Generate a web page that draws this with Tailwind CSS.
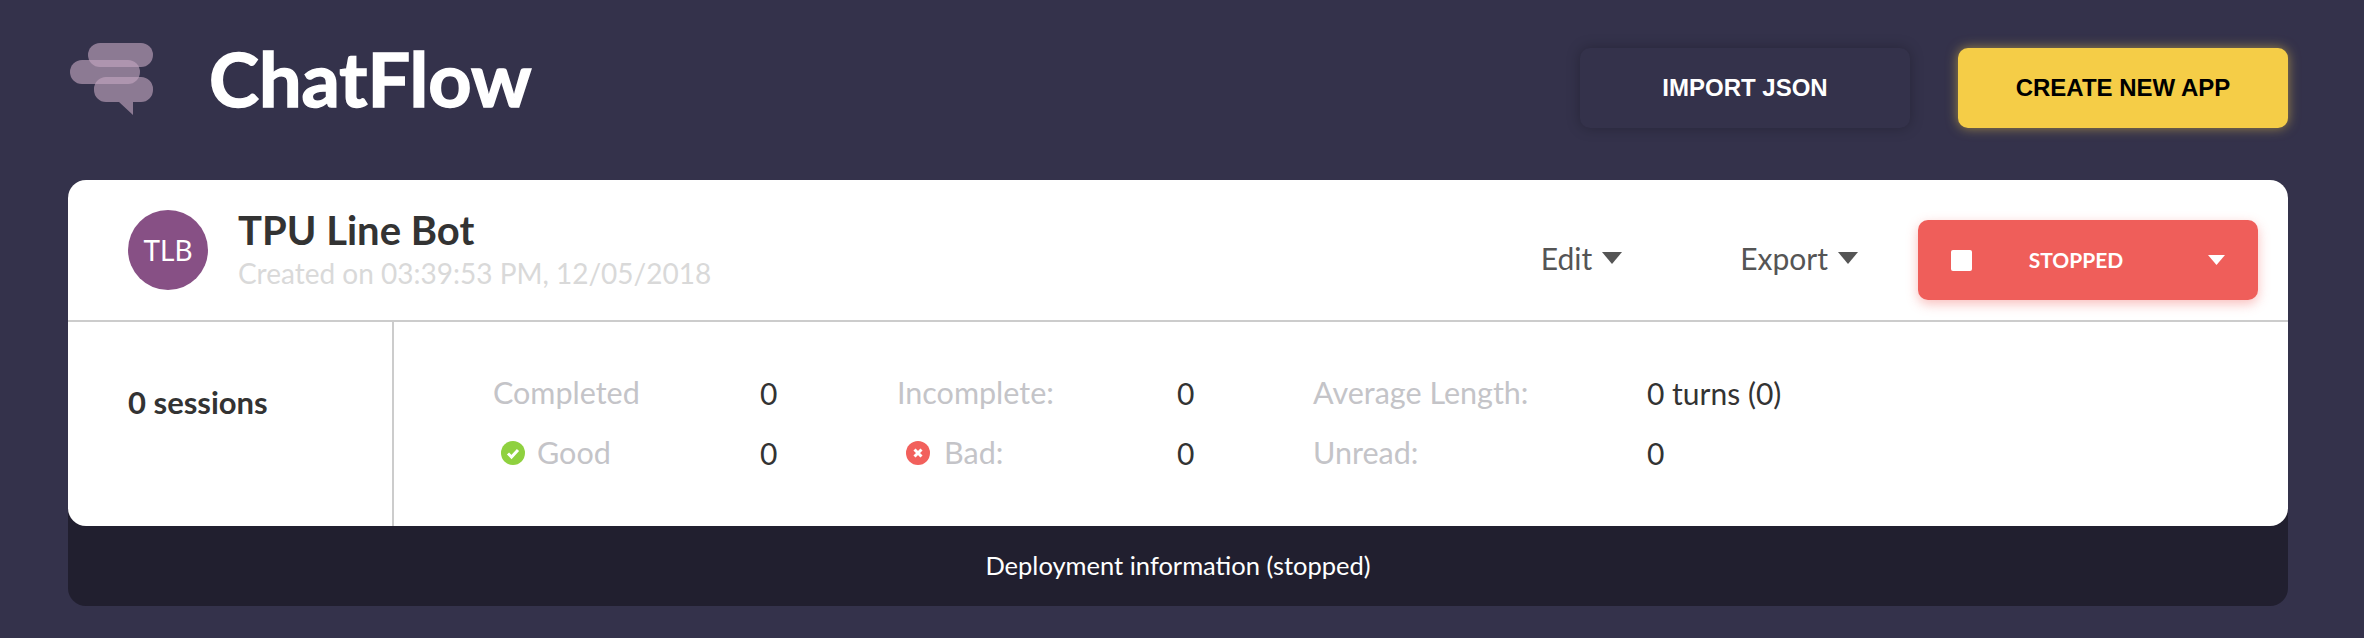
<!DOCTYPE html>
<html lang="en">
<head>
    <meta charset="UTF-8">
    <title>ChatFlow</title>
    <script src="https://cdn.jsdelivr.net/npm/@tailwindcss/browser@4"></script>
</head>
<body class="bg-[#34324b] font-['Lato',sans-serif] h-[638px] overflow-hidden">

<div class="pl-[68px] pr-[76px]">
    <!-- Header -->
    <div class="h-[180px] flex items-start justify-between">
        <div class="flex items-center pt-[38px]">
            <svg width="100" height="80" viewBox="0 0 100 80" class="block blur-[0.6px]">
                <g fill="#c3a6c0" fill-opacity="0.62">
                    <rect x="20" y="5" width="65" height="24" rx="12"/>
                    <rect x="2" y="22" width="70" height="24" rx="12"/>
                    <path d="M38 39h35a12 12 0 0 1 12 12v1a12 12 0 0 1-12 12h-8l0 13-14-13h-13a12 12 0 0 1-12-12v-1a12 12 0 0 1 12-12z"/>
                </g>
            </svg>
            <span class="ml-[41px] text-white font-bold text-[75.500px] leading-[70px] [-webkit-text-stroke:1.5px_white] blur-[0.6px]">ChatFlow</span>
        </div>
        <div class="flex gap-[48px] pt-[48px]">
            <button class="w-[330px] h-[80px] rounded-[10px] bg-[#34324b] text-white font-['Liberation_Sans',sans-serif] font-bold text-[24px] shadow-[0_0_14px_rgba(0,0,0,0.25)]">IMPORT JSON</button>
            <button class="w-[330px] h-[80px] rounded-[10px] bg-[#f5cd47] text-black font-['Liberation_Sans',sans-serif] font-bold text-[24px] shadow-[0_0_12px_rgba(245,205,71,0.55)]">CREATE NEW APP</button>
        </div>
    </div>

    <!-- App card -->
    <div class="bg-[#211f2f] rounded-[18px]">
        <div class="bg-white rounded-[18px] h-[346px] flex flex-col">
            <div class="h-[142px] shrink-0 flex items-start pl-[60px] pr-[30px] pt-[30px] border-b-2 border-[#cccccc]">
                <div class="w-[80px] h-[80px] rounded-full bg-[#875085] text-white text-[28px] flex items-center justify-center">TLB</div>
                <div class="ml-[30px] -mt-[4px]">
                    <div class="text-[40px] leading-[48px] font-bold text-[#333333]">TPU Line Bot</div>
                    <div class="text-[28px] leading-[38px] text-[#d9d9d9]">Created on 03:39:53 PM, 12/05/2018</div>
                </div>
                <div class="ml-auto flex items-center h-[76px] mt-[10px] text-[#555555] text-[30px]">
                    <span>Edit</span>
                    <svg width="20" height="12" viewBox="0 0 20 12" class="ml-[10px]"><path d="M0 0h20l-10 12z" fill="#555555"/></svg>
                    <span class="ml-[118px]">Export</span>
                    <svg width="20" height="12" viewBox="0 0 20 12" class="ml-[10px]"><path d="M0 0h20l-10 12z" fill="#555555"/></svg>
                </div>
                <div class="ml-[60px] mt-[10px] w-[340px] h-[80px] rounded-[10px] bg-[#ef5e5a] text-white flex items-center px-[33px] shadow-[0_4px_12px_rgba(239,94,90,0.4)]">
                    <div class="w-[21px] h-[21px] bg-white rounded-[2px]"></div>
                    <span class="flex-1 text-center text-[21px] font-bold pr-[28px]">STOPPED</span>
                    <svg width="17" height="10" viewBox="0 0 17 10"><path d="M0 0h17l-8.500 10z" fill="#ffffff"/></svg>
                </div>
            </div>
            <div class="flex flex-1">
                <div class="w-[326px] shrink-0 border-r-2 border-[#cccccc] pl-[60px] pt-[62px] text-[31px] leading-[36px] font-bold text-[#333333]">0 sessions</div>
                <div class="pt-[41px] pl-[99px] grid grid-cols-[267px_137px_280px_136px_334px_auto] grid-rows-[60px_60px] items-center text-[30.500px] text-[#c4c4c8]">
                    <div>Completed</div>
                    <div class="text-[#333333] text-[30px]">0</div>
                    <div>Incomplete:</div>
                    <div class="text-[#333333] text-[30px]">0</div>
                    <div>Average Length:</div>
                    <div class="text-[#333333] text-[30px]">0 turns (0)</div>
                    <div class="flex items-center pl-[8px]">
                        <svg width="24" height="24" viewBox="0 0 24 24"><circle cx="12" cy="12" r="12" fill="#8fd13f"/><path d="M7 12.500l3.500 3.500 6.500-7" fill="none" stroke="#ffffff" stroke-width="3"/></svg>
                        <span class="ml-[12px]">Good</span>
                    </div>
                    <div class="text-[#333333] text-[30px]">0</div>
                    <div class="flex items-center pl-[9px]">
                        <svg width="24" height="24" viewBox="0 0 24 24"><circle cx="12" cy="12" r="12" fill="#f2605c"/><path d="M8.500 8.500l7 7m0-7l-7 7" fill="none" stroke="#ffffff" stroke-width="3"/></svg>
                        <span class="ml-[14px]">Bad:</span>
                    </div>
                    <div class="text-[#333333] text-[30px]">0</div>
                    <div>Unread:</div>
                    <div class="text-[#333333] text-[30px]">0</div>
                </div>
            </div>
        </div>
        <div class="h-[80px] pb-[2px] flex items-center justify-center text-white text-[25.500px]">Deployment information (stopped)</div>
    </div>
</div>

</body>
</html>
